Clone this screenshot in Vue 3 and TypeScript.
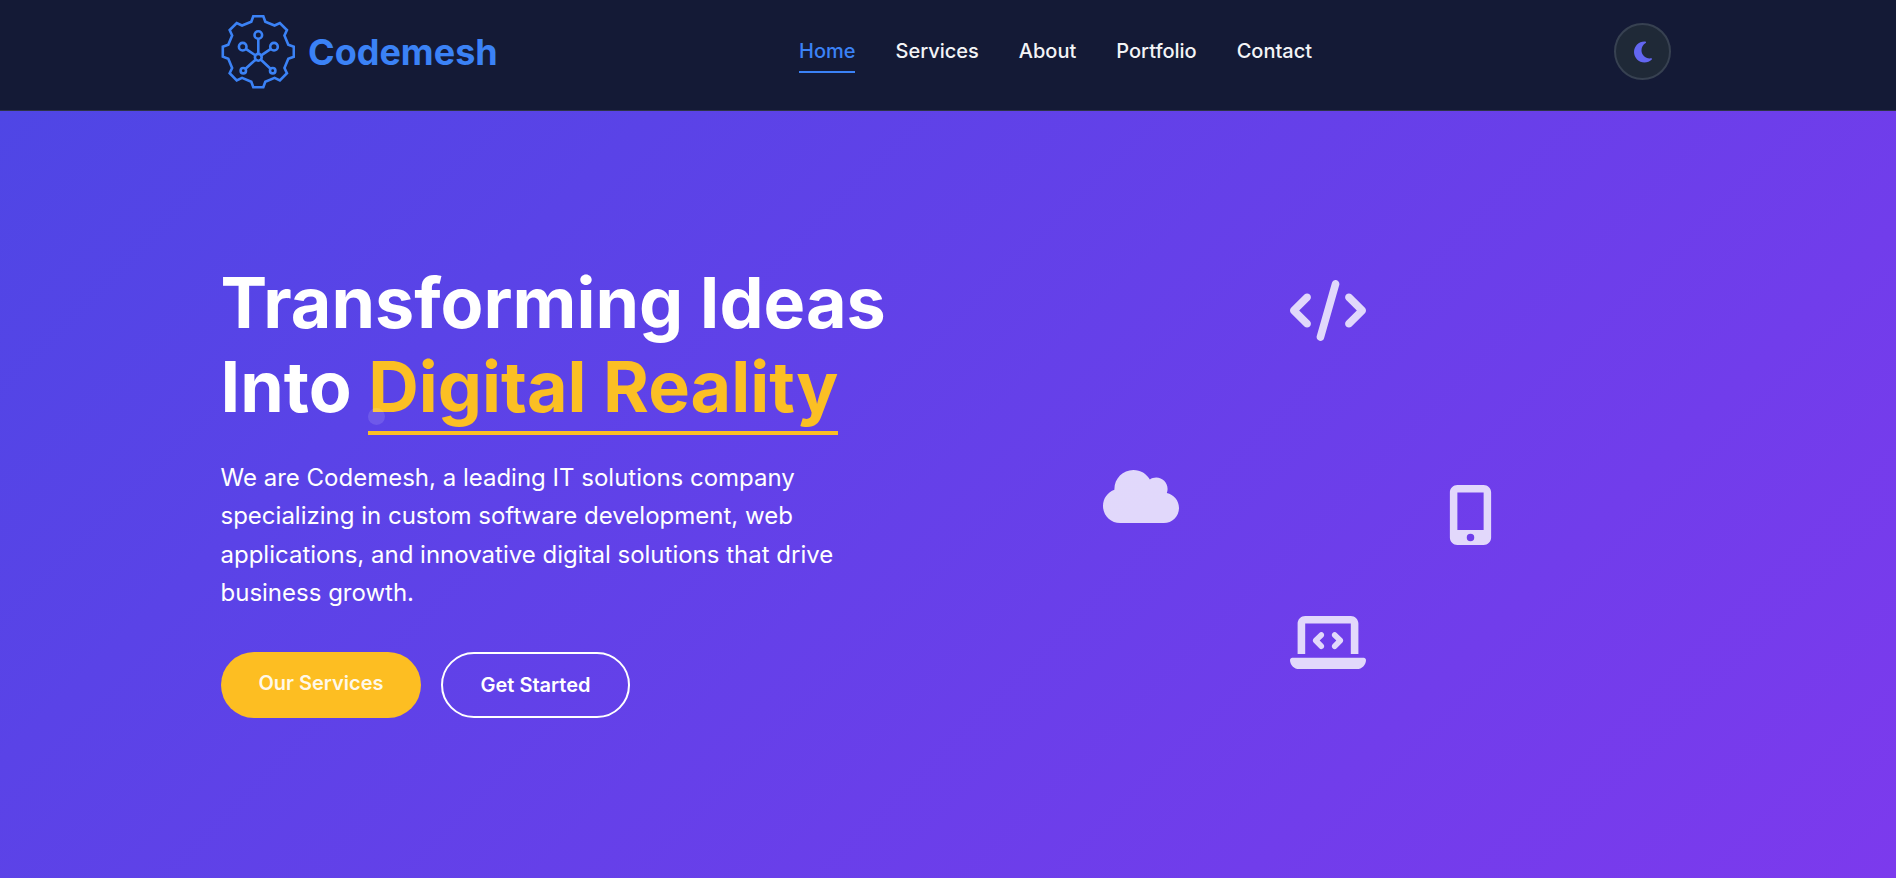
<script setup lang="ts">
const links = ["Home", "Services", "About", "Portfolio", "Contact"];

// gear outline: 8 teeth around the centre of the 74x74 mark
function buildGear(cx: number, cy: number): string {
  const tooth = [[-7, 30], [-5, 35.5], [5, 35.5], [7, 30]];
  const pts: string[] = [];
  for (let i = 0; i < 8; i++) {
    const a = (i * Math.PI) / 4;
    for (const [x, y] of tooth) {
      const px = cx + x * Math.cos(a) + y * Math.sin(a);
      const py = cy + x * Math.sin(a) - y * Math.cos(a);
      pts.push(`${px.toFixed(2)} ${py.toFixed(2)}`);
    }
  }
  return `M${pts.join("L")}Z`;
}

const gearPath = buildGear(37.3, 36.7);
</script>

<template>
  <div class="page">
    <header class="navbar">
      <div class="nav-inner">
        <a class="brand" href="#">
          <svg class="brand-mark" viewBox="0 0 74 74" fill="none" stroke="#3b82f6" stroke-width="2.6">
            <path stroke-linejoin="miter" :d="gearPath" />
            <path d="M37.3 23.5V42.3M37.3 42.3 24.5 33.7M37.3 42.3 50.2 33.7M37.3 42.3 24.2 54M37.3 42.3 49.8 54" />
            <circle cx="37.3" cy="20" r="3.8" fill="#141a36" />
            <circle cx="21.7" cy="31.7" r="3.8" fill="#141a36" />
            <circle cx="53" cy="31.7" r="3.8" fill="#141a36" />
            <circle cx="22.3" cy="55.7" r="2.7" fill="#141a36" />
            <circle cx="51.7" cy="55.7" r="2.7" fill="#141a36" />
            <circle cx="37.3" cy="42.3" r="3.4" fill="#141a36" />
          </svg>
          <span class="brand-name">Codemesh</span>
        </a>
        <nav class="nav-links">
          <a v-for="(link, i) in links" :key="link" href="#" class="nav-link" :class="{ active: i === 0 }">{{ link }}</a>
        </nav>
        <button class="theme-toggle" type="button" aria-label="Toggle theme">
          <svg viewBox="0 0 384 512" class="moon" fill="currentColor">
            <path d="M223.5 32C100 32 0 132.3 0 256S100 480 223.5 480c60.6 0 115.5-24.2 155.8-63.4c5-4.9 6.3-12.5 3.1-18.7s-10.1-9.7-17-8.5c-9.8 1.7-19.8 2.6-30.1 2.6c-96.9 0-175.5-78.8-175.5-176c0-65.8 36-123.1 89.3-153.3c6.1-3.5 9.2-10.5 7.7-17.3s-7.3-11.9-14.3-12.5c-6.3-.5-12.6-.8-19-.8z" />
          </svg>
        </button>
      </div>
    </header>

    <section class="hero">
      <div class="hero-inner">
        <div class="hero-copy">
          <h1>Transforming Ideas<br />Into <span class="accent">Digital Reality</span></h1>
          <p>We are Codemesh, a leading IT solutions company specializing in custom software development, web applications, and innovative digital solutions that drive business growth.</p>
          <div class="actions">
            <a class="btn btn-primary" href="#"><span>Our Services</span></a>
            <a class="btn btn-outline" href="#">Get Started</a>
          </div>
        </div>
        <div class="hero-visual">
          <svg class="float f-code" viewBox="0 0 640 512" fill="currentColor">
            <path d="M392.8 1.2c-17-4.9-34.7 5-39.6 22l-128 448c-4.9 17 5 34.7 22 39.6s34.7-5 39.6-22l128-448c4.9-17-5-34.7-22-39.6zm80.6 120.1c-12.5 12.5-12.5 32.8 0 45.3L562.7 256l-89.4 89.4c-12.5 12.5-12.5 32.8 0 45.3s32.8 12.5 45.3 0l112-112c12.5-12.5 12.5-32.8 0-45.3l-112-112c-12.5-12.5-32.8-12.5-45.3 0zm-306.7 0c-12.5-12.5-32.8-12.5-45.3 0l-112 112c-12.5 12.5-12.5 32.8 0 45.3l112 112c12.5 12.5 32.8 12.5 45.3 0s12.5-32.8 0-45.3L77.3 256l89.4-89.4c12.5-12.5 12.5-32.8 0-45.3z" />
          </svg>
          <svg class="float f-cloud" viewBox="0 0 640 512" fill="currentColor">
            <path d="M0 336c0 79.5 64.5 144 144 144H512c70.7 0 128-57.3 128-128c0-61.9-44-113.6-102.4-125.4c4.1-10.7 6.4-22.4 6.4-34.6c0-53-43-96-96-96c-19.7 0-38.1 6-53.3 16.2C367 64.2 315.3 32 256 32C167.6 32 96 103.6 96 192c0 2.7 .1 5.4 .2 8.1C40.2 219.8 0 273.2 0 336z" />
          </svg>
          <svg class="float f-mobile" viewBox="0 0 384 512" fill="currentColor">
            <path d="M16 64C16 28.7 44.7 0 80 0H304c35.3 0 64 28.7 64 64V448c0 35.3-28.7 64-64 64H80c-35.3 0-64-28.7-64-64V64zM224 448a32 32 0 1 0 -64 0 32 32 0 1 0 64 0zM304 64H80V384H304V64z" />
          </svg>
          <svg class="float f-laptop" viewBox="0 0 640 512" fill="currentColor">
            <path d="M64 96c0-35.3 28.7-64 64-64H512c35.3 0 64 28.7 64 64V352H512V96H128V352H64V96zM0 403.2C0 392.6 8.6 384 19.2 384H620.8c10.6 0 19.2 8.6 19.2 19.2c0 42.4-34.4 76.8-76.8 76.8H76.8C34.4 480 0 445.6 0 403.2zM281 209l-31 31 31 31c9.4 9.4 9.4 24.6 0 33.9s-24.6 9.4-33.9 0l-48-48c-9.4-9.4-9.4-24.6 0-33.9l48-48c9.4-9.4 24.6-9.4 33.9 0s9.4 24.6 0 33.9zM393 175l48 48c9.4 9.4 9.4 24.6 0 33.9l-48 48c-9.4 9.4-24.6 9.4-33.9 0s-9.4-24.6 0-33.9l31-31-31-31c-9.4-9.4-9.4-24.6 0-33.9s24.6-9.4 33.9 0z" />
          </svg>
        </div>
      </div>
      <span class="particle"></span>
    </section>
  </div>
</template>

<style>
html,
body {
  margin: 0;
  height: 100%;
  overflow: hidden;
}
</style>

<style scoped>
.page {
  height: 878px;
  display: flex;
  flex-direction: column;
  font-family: Inter, "Liberation Sans", sans-serif;
}
a {
  text-decoration: none;
}
.navbar {
  flex: none;
  height: 110px;
  border-bottom: 1px solid #2d3348;
  background: #141a36;
}
.nav-inner {
  height: 103px;
  padding: 0 225px 0 221px;
  display: flex;
  align-items: center;
  justify-content: space-between;
}
.brand {
  display: flex;
  align-items: center;
  gap: 13px;
  width: 578px;
}
.brand-mark {
  width: 74px;
  height: 74px;
  flex: none;
}
.brand-name {
  color: #3b82f6;
  font-size: 36px;
  font-weight: 700;
}
.nav-links {
  display: flex;
  gap: 40px;
  margin-right: auto;
}
.nav-link {
  position: relative;
  color: #f3f4f6;
  font-size: 20px;
  font-weight: 500;
  padding: 8px 0 10px;
}
.nav-link.active {
  color: #3b82f6;
}
.nav-link.active::after {
  content: "";
  position: absolute;
  left: 0;
  right: 0;
  bottom: 0;
  height: 2px;
  background: #3b82f6;
}
.theme-toggle {
  width: 57px;
  height: 57px;
  padding: 0;
  border-radius: 50%;
  border: 2px solid #374151;
  background: #1f2937;
  color: #6366f1;
  display: flex;
  align-items: center;
  justify-content: center;
}
.moon {
  width: 24px;
  height: 24px;
}
.hero {
  position: relative;
  flex: 1;
  background: linear-gradient(135deg, #4f46e5 0%, #7c3aed 100%);
  overflow: hidden;
}
.hero-inner {
  padding: 150px 225px 0 220.5px;
  display: grid;
  grid-template-columns: 1fr 1fr;
  gap: 64px;
}
.hero-copy h1 {
  margin: 0 0 30px;
  color: #fff;
  font-size: 70px;
  font-weight: 700;
  line-height: 1.2;
}
.accent {
  position: relative;
  color: #fbbf24;
}
.accent::after {
  content: "";
  position: absolute;
  left: 0;
  right: 0;
  bottom: -5.5px;
  height: 4px;
  background: #fbbf24;
}
.hero-copy p {
  margin: 0 0 39px;
  color: #fff;
  font-size: 24px;
  line-height: 1.6;
  max-width: 640px;
}
.actions {
  display: flex;
  gap: 20px;
  padding-left: 0.5px;
}
.btn {
  box-sizing: border-box;
  height: 66px;
  border-radius: 33px;
  display: flex;
  align-items: center;
  justify-content: center;
  color: #fff;
  font-size: 20px;
  font-weight: 600;
}
.btn-primary {
  width: 200px;
  background: #fdbe22;
  color: rgba(255, 255, 255, 0.92);
}
.btn-primary span {
  margin-bottom: 4px;
}
.btn-outline {
  width: 189px;
  border: 2px solid #fff;
}
.hero-visual {
  position: relative;
  height: 480px;
  top: -1px;
  color: rgba(255, 255, 255, 0.8);
}
.float {
  position: absolute;
  width: 76px;
  height: 61px;
}
.f-code {
  left: 312px;
  top: 20px;
}
.f-cloud {
  left: 125px;
  top: 206px;
}
.f-mobile {
  left: 470px;
  top: 225px;
  width: 45px;
  height: 60px;
}
.f-laptop {
  left: 312px;
  top: 352px;
}
.particle {
  position: absolute;
  left: 368px;
  top: 297px;
  width: 17px;
  height: 17px;
  border-radius: 50%;
  background: rgba(255, 255, 255, 0.12);
}
</style>
